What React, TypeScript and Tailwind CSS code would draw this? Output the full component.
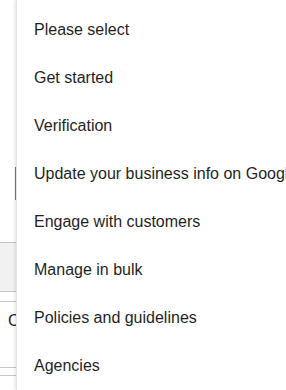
const items = [
  "Please select",
  "Get started",
  "Verification",
  "Update your business info on Google",
  "Engage with customers",
  "Manage in bulk",
  "Policies and guidelines",
  "Agencies",
];

export default function App() {
  return (
    <main className="relative h-[390px] w-[286px] overflow-hidden bg-white font-['Liberation_Sans',Arial,sans-serif]">
      {/* page behind the menu */}
      <div className="flex flex-col">
        <div className="h-[167px]" />
        <div className="h-[33px] w-[16px] border-r border-[#7a7a7a]" />
        <div className="h-[42px]" />
        <div className="h-[50px] border-y border-[#c6c6c6] bg-[#f1f1f1]" />
        <div className="h-[9px]" />
        <div className="border-t border-[#c6c6c6] pl-[8px] pt-[9px] text-[16px] leading-[20px] text-[#1f1f1f]">
          C
        </div>
        <div className="h-[36px]" />
        <div className="h-[9px] border-y border-[#c6c6c6]" />
      </div>

      {/* dropdown menu, clipped by the window on the right like in the shot */}
      <div className="absolute bottom-0 left-[16px] right-0 top-0 overflow-hidden border-l border-[#e3e3e3] bg-white pt-[6px] shadow-[-1px_0_3px_rgba(0,0,0,0.12)]">
        {items.map((label) => (
          <div
            key={label}
            className="flex h-[48px] items-center whitespace-nowrap pl-[17px] text-[16px] text-[#1f1f1f]"
          >
            {label}
          </div>
        ))}
      </div>
    </main>
  );
}
